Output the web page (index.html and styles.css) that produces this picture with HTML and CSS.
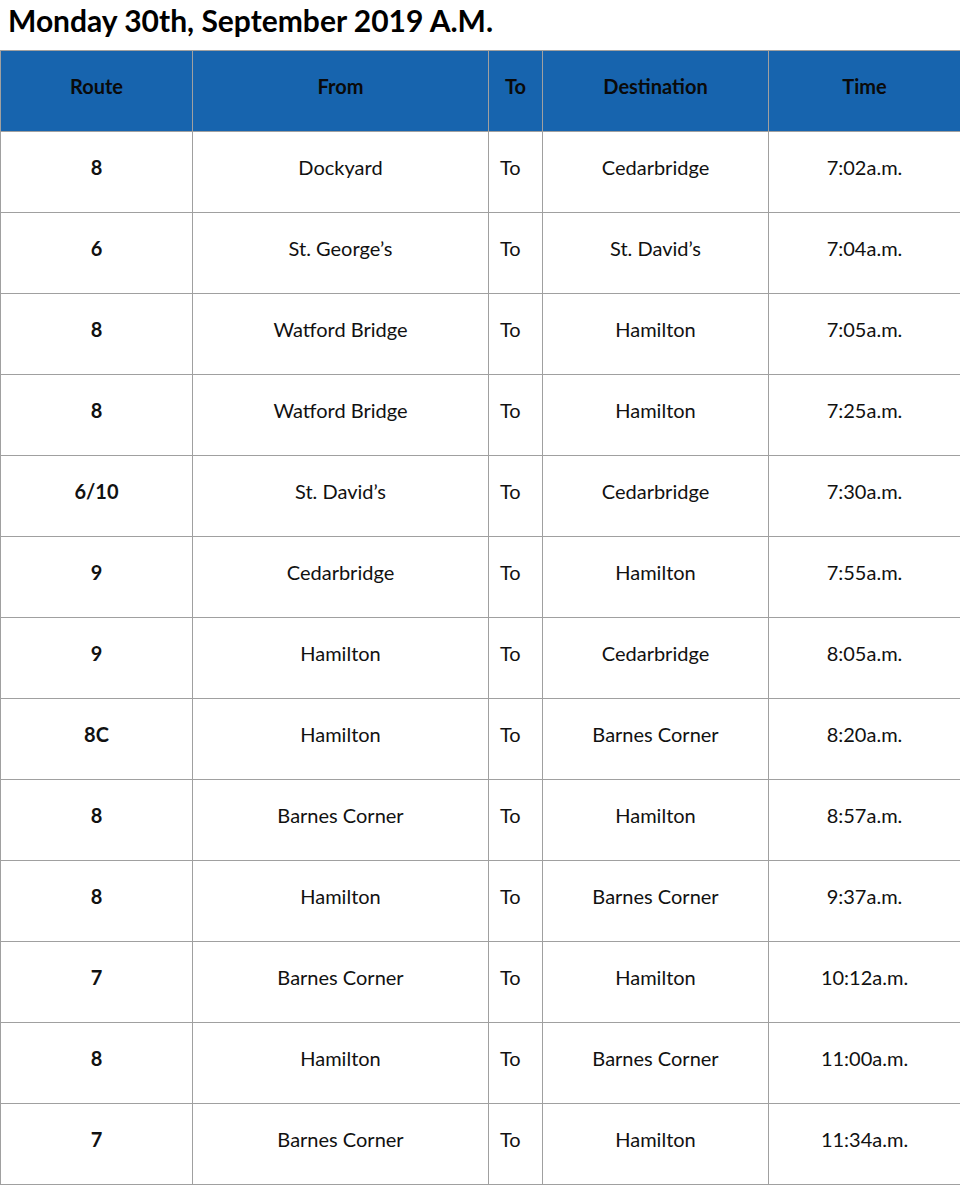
FILE: index.html
```html
<!DOCTYPE html>
<html lang="en">
<head>
<meta charset="utf-8">
<title>Bus Schedule</title>
<link rel="stylesheet" href="styles.css">
</head>
<body>
<h2 class="title">Monday 30th, September 2019 A.M.</h2>
<table class="schedule">
  <colgroup>
    <col class="c-route"><col class="c-from"><col class="c-to"><col class="c-dest"><col class="c-time">
  </colgroup>
  <thead>
    <tr><th>Route</th><th>From</th><th>To</th><th>Destination</th><th>Time</th></tr>
  </thead>
  <tbody>
    <tr><td class="route">8</td><td>Dockyard</td><td class="to">To</td><td>Cedarbridge</td><td>7:02a.m.</td></tr>
    <tr><td class="route">6</td><td>St. George’s</td><td class="to">To</td><td>St. David’s</td><td>7:04a.m.</td></tr>
    <tr><td class="route">8</td><td>Watford Bridge</td><td class="to">To</td><td>Hamilton</td><td>7:05a.m.</td></tr>
    <tr><td class="route">8</td><td>Watford Bridge</td><td class="to">To</td><td>Hamilton</td><td>7:25a.m.</td></tr>
    <tr><td class="route">6/10</td><td>St. David’s</td><td class="to">To</td><td>Cedarbridge</td><td>7:30a.m.</td></tr>
    <tr><td class="route">9</td><td>Cedarbridge</td><td class="to">To</td><td>Hamilton</td><td>7:55a.m.</td></tr>
    <tr><td class="route">9</td><td>Hamilton</td><td class="to">To</td><td>Cedarbridge</td><td>8:05a.m.</td></tr>
    <tr><td class="route">8C</td><td>Hamilton</td><td class="to">To</td><td>Barnes Corner</td><td>8:20a.m.</td></tr>
    <tr><td class="route">8</td><td>Barnes Corner</td><td class="to">To</td><td>Hamilton</td><td>8:57a.m.</td></tr>
    <tr><td class="route">8</td><td>Hamilton</td><td class="to">To</td><td>Barnes Corner</td><td>9:37a.m.</td></tr>
    <tr><td class="route">7</td><td>Barnes Corner</td><td class="to">To</td><td>Hamilton</td><td>10:12a.m.</td></tr>
    <tr><td class="route">8</td><td>Hamilton</td><td class="to">To</td><td>Barnes Corner</td><td>11:00a.m.</td></tr>
    <tr><td class="route">7</td><td>Barnes Corner</td><td class="to">To</td><td>Hamilton</td><td>11:34a.m.</td></tr>
  </tbody>
</table>
</body>
</html>
```
FILE: styles.css
```css
html, body {
  margin: 0;
  padding: 0;
  background: #fff;
}
body {
  font-family: Lato, "Liberation Sans", sans-serif;
  color: #111;
}
.title {
  margin: 0;
  padding: 2px 0 0 8px;
  height: 50px;
  box-sizing: border-box;
  font-size: 30px;
  font-weight: 700;
  line-height: 36px;
  color: #000;
}
.schedule {
  width: 960px;
  border-collapse: collapse;
  table-layout: fixed;
}
.c-route { width: 192px; }
.c-from { width: 296px; }
.c-to { width: 54px; }
.c-dest { width: 226px; }
.c-time { width: 192px; }
.schedule th,
.schedule td {
  border: 1px solid #a0a0a0;
  height: 81px;
  padding: 0 0 10px 0;
  box-sizing: border-box;
  text-align: center;
  vertical-align: middle;
  font-size: 20px;
  line-height: 24px;
}
.schedule th {
  background: #1764ae;
  color: #0a0a0a;
  font-weight: 700;
}
.schedule td {
  font-weight: 400;
}
.schedule td.route {
  font-weight: 700;
}
.schedule td.to {
  text-align: left;
  padding-left: 11px;
}
```
